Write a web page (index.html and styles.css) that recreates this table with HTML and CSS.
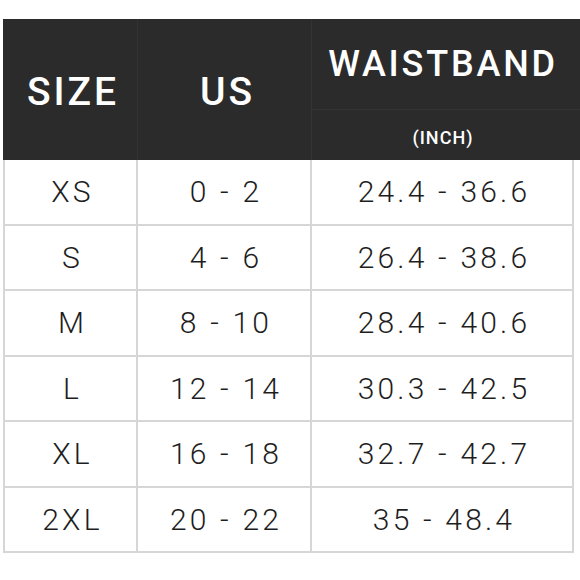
FILE: index.html
```html
<!DOCTYPE html>
<html>
<head>
<meta charset="utf-8">
<link rel="stylesheet" href="styles.css">
</head>
<body>
<div class="chart">
  <div class="head">
    <div class="hcell">SIZE</div>
    <div class="hcell">US</div>
    <div class="hsplit">
      <div class="htop">WAISTBAND</div>
      <div class="hbot">(INCH)</div>
    </div>
  </div>
  <div class="rows">
    <div class="cell first">XS</div><div class="cell">0 - 2</div><div class="cell">24.4 - 36.6</div>
    <div class="cell first">S</div><div class="cell">4 - 6</div><div class="cell">26.4 - 38.6</div>
    <div class="cell first">M</div><div class="cell">8 - 10</div><div class="cell">28.4 - 40.6</div>
    <div class="cell first">L</div><div class="cell">12 - 14</div><div class="cell">30.3 - 42.5</div>
    <div class="cell first">XL</div><div class="cell">16 - 18</div><div class="cell">32.7 - 42.7</div>
    <div class="cell first">2XL</div><div class="cell">20 - 22</div><div class="cell">35 - 48.4</div>
  </div>
</div>
</body>
</html>
```
FILE: styles.css
```css
html, body {
  margin: 0;
  padding: 0;
  background: #ffffff;
}
.chart {
  padding: 19px 0 0 3px;
  font-family: Roboto, "DejaVu Sans", sans-serif;
}
.head {
  display: grid;
  grid-template-columns: 135px 174px 1fr;
  height: 141px;
  background: #2b2b2b;
  color: #ffffff;
}
.hcell {
  display: flex;
  align-items: center;
  justify-content: center;
  font-size: 39px;
  font-weight: 500;
  letter-spacing: 3px;
  padding-top: 4px;
  padding-left: 6px;
  border-right: 1px solid #333333;
}
.hsplit {
  display: grid;
  grid-template-rows: 91px 1fr;
}
.htop {
  display: flex;
  align-items: center;
  justify-content: center;
  font-size: 36px;
  font-weight: 500;
  letter-spacing: 2.8px;
  padding-right: 6px;
  border-bottom: 1px solid #333333;
}
.hbot {
  display: flex;
  align-items: center;
  justify-content: center;
  font-size: 18px;
  font-weight: 500;
  letter-spacing: 1px;
  padding-top: 4px;
  padding-right: 6px;
}
.rows {
  width: 571px;
  display: grid;
  grid-template-columns: 135px 174px 1fr;
  grid-auto-rows: 65.5px;
}
.cell {
  display: flex;
  align-items: center;
  justify-content: center;
  border-right: 2px solid #d6d6d6;
  border-bottom: 2px solid #d6d6d6;
  font-size: 30px;
  font-weight: 300;
  color: #1e1e1e;
  letter-spacing: 3.2px;
  padding-left: 4px;
  box-sizing: border-box;
}
.first {
  border-left: 2px solid #d6d6d6;
}
```
